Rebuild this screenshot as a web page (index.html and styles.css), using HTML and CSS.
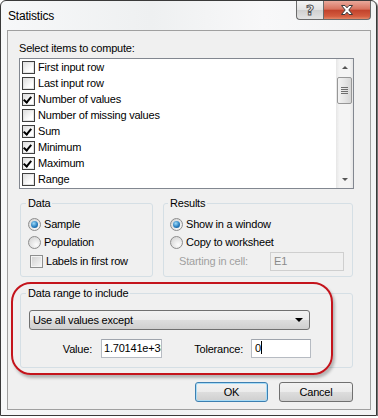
FILE: index.html
```html
<!DOCTYPE html>
<html lang="en">
<head>
    <meta charset="UTF-8">
    <title>Statistics</title>
    <link rel="stylesheet" href="styles.css">
</head>
<body>
    <div class="window">
        <div class="titlebar">
            <span class="title">Statistics</span>
            <div class="caption">
                <span class="caption-help">?</span>
                <span class="caption-close">
                    <svg width="14" height="12" viewBox="0 0 14 12">
                        <path d="M1.5 1.5h3.5l2 2.3 2-2.3h3.5l-3.7 4.5 3.7 4.5h-3.5l-2-2.3-2 2.3h-3.5l3.7-4.5z" fill="#fff" stroke="#3b3b3b" stroke-width="1"/>
                    </svg>
                </span>
            </div>
        </div>

        <div class="client">
            <div class="caption-label">Select items to compute:</div>
            <div class="listbox">
                <div class="items">
                    <div class="item"><span class="check"></span>First input row</div>
                    <div class="item"><span class="check"></span>Last input row</div>
                    <div class="item"><span class="check checked"></span>Number of values</div>
                    <div class="item"><span class="check"></span>Number of missing values</div>
                    <div class="item"><span class="check checked"></span>Sum</div>
                    <div class="item"><span class="check checked"></span>Minimum</div>
                    <div class="item"><span class="check checked"></span>Maximum</div>
                    <div class="item"><span class="check"></span>Range</div>
                </div>
                <div class="scrollbar">
                    <span class="arrow arrow-up"></span>
                    <span class="thumb"><span class="grip"></span></span>
                    <span class="arrow arrow-down"></span>
                </div>
            </div>

            <div class="groups">
                <fieldset class="group group-data">
                    <legend>Data</legend>
                    <div class="row"><span class="radio selected"></span>Sample</div>
                    <div class="row"><span class="radio"></span>Population</div>
                    <div class="row row-last"><span class="box3d"></span>Labels in first row</div>
                </fieldset>
                <fieldset class="group group-results">
                    <legend>Results</legend>
                    <div class="row"><span class="radio selected"></span>Show in a window</div>
                    <div class="row"><span class="radio"></span>Copy to worksheet</div>
                    <div class="row row-last">
                        <span class="disabled-label">Starting in cell:</span>
                        <span class="textbox textbox-disabled">E1</span>
                    </div>
                </fieldset>
            </div>

            <fieldset class="group group-range">
                <legend>Data range to include</legend>
                <div class="combo">
                    <span>Use all values except</span>
                    <span class="combo-arrow"></span>
                </div>
                <div class="value-row">
                    <span class="field-label label-value">Value:</span>
                    <span class="textbox textbox-value">1.70141e+38</span>
                    <span class="field-label label-tolerance">Tolerance:</span>
                    <span class="textbox textbox-tolerance">0<span class="caret"></span></span>
                </div>
            </fieldset>

            <div class="actions">
                <span class="button button-default">OK</span>
                <span class="button">Cancel</span>
            </div>
        </div>

        <!-- highlight drawn over the screenshot -->
        <div class="annotation"></div>
    </div>
</body>
</html>
```

FILE: styles.css
```css
body {
    margin: 0;
    background: #fff;
    font-family: "Liberation Sans", Arial, sans-serif;
    font-size: 11px;
    letter-spacing: -0.2px;
    color: #000;
}
.window {
    position: relative;
    width: 377px;
    height: 416px;
    box-sizing: border-box;
    border: 1px solid #3a3a3a;
    border-radius: 6px 6px 0 0;
    background: linear-gradient(90deg, #f7f8f9, #eef0f1 40%, #f8f8f9 70%, #f2f3f4);
    padding: 0 5px 5px 6px;
    display: flex;
    flex-direction: column;
    box-shadow: 1px 1px 1px rgba(0,0,0,0.6);
}
.titlebar {
    height: 29px;
    display: flex;
    justify-content: space-between;
    align-items: flex-start;
}
.title {
    font-size: 12px;
    line-height: 14px;
    margin-top: 8px;
    padding-left: 1px;
    color: #000;
}
.caption {
    display: flex;
}
.caption-help,
.caption-close {
    height: 18px;
    display: flex;
    align-items: center;
    justify-content: center;
    border: 1px solid #6b6b6b;
    border-top: none;
}
.caption-help {
    width: 26px;
    border-right: none;
    border-radius: 0 0 0 4px;
    background: linear-gradient(#f4f4f4, #e2e2e2 50%, #d0d0d0 51%, #e4e4e4);
    font-family: "DejaVu Sans", sans-serif;
    font-size: 14px;
    font-weight: bold;
    color: #fff;
    -webkit-text-stroke: 1px #555;
}
.caption-close {
    width: 46px;
    border-radius: 0 0 4px 0;
    background: linear-gradient(#e9a99b, #d8735f 45%, #c2432c 52%, #d45c3f 85%, #e38868);
}
.client {
    flex: 1;
    border: 1px solid #a0a0a0;
    background: #f0f0f0;
    padding: 10px 16px 0 11px;
}
.caption-label {
    line-height: 15px;
    margin-bottom: 2px;
}
.listbox {
    height: 131px;
    box-sizing: border-box;
    border: 1px solid #828790;
    background: #fff;
    display: flex;
}
.items {
    flex: 1;
}
.item {
    height: 16px;
    display: flex;
    align-items: center;
    gap: 3px;
    padding-left: 2px;
}
.check {
    width: 11px;
    height: 11px;
    border: 1px solid #3f3f3f;
    background: linear-gradient(135deg, #dcdcdc, #fff 70%);
    box-shadow: inset 0 0 0 1px #e4e4e4;
    position: relative;
}
.check.checked::after,
.box3d.checked::after {
    content: "";
    position: absolute;
    left: 2px;
    top: 1px;
    width: 3px;
    height: 6px;
    border: solid #000;
    border-width: 0 2px 2px 0;
    transform: rotate(40deg);
}
.scrollbar {
    width: 17px;
    background: linear-gradient(90deg, #e6e6e6, #f4f4f4 20%, #f4f4f4 80%, #e6e6e6);
    display: flex;
    flex-direction: column;
    align-items: center;
}
.arrow {
    width: 0;
    height: 0;
    border-left: 3px solid transparent;
    border-right: 3px solid transparent;
}
.arrow-up {
    border-bottom: 3px solid #555;
    margin-top: 7px;
}
.arrow-down {
    border-top: 3px solid #555;
    margin-top: auto;
    margin-bottom: 7px;
}
.thumb {
    width: 13px;
    height: 25px;
    margin-top: 8px;
    border: 1px solid #979797;
    border-radius: 2px;
    background: linear-gradient(90deg, #f3f3f3, #e6e6e6 50%, #d6d6d6);
    display: flex;
    align-items: center;
    justify-content: center;
}
.grip {
    width: 7px;
    height: 7px;
    background: repeating-linear-gradient(#6e6e6e 0, #6e6e6e 1px, transparent 1px, transparent 2px);
}
.groups {
    display: flex;
    gap: 10px;
    margin: 7px 1px 0;
}
.group {
    margin: 0;
    border: 1px solid #d5dfe5;
    border-radius: 3px;
    padding: 6px 0 6px 7px;
    min-width: 0;
}
.group legend {
    line-height: 14px;
    padding: 0 2px;
    margin-left: -2px;
}
.group-data {
    width: 133px;
    box-sizing: border-box;
}
.group-results {
    width: 190px;
    box-sizing: border-box;
    padding-left: 6px;
}
.row {
    height: 16px;
    display: flex;
    align-items: center;
    gap: 3px;
    margin-bottom: 2px;
}
.row-last {
    height: 18px;
    margin: 1px 0 0;
}
.radio {
    width: 11px;
    height: 11px;
    border: 1px solid #8d8d8d;
    border-radius: 50%;
    background: radial-gradient(circle at 65% 70%, #fcfcfc, #d7d7d7 80%);
    position: relative;
}
.radio.selected::after {
    content: "";
    position: absolute;
    left: 2px;
    top: 2px;
    width: 7px;
    height: 7px;
    border-radius: 50%;
    background: radial-gradient(circle at 40% 35%, #9ddbf9, #2a7fc0 55%, #0d4b84);
}
.group-data .row-last {
    padding-left: 2px;
}
.box3d {
    width: 11px;
    height: 11px;
    border: 1px solid #8e8f8f;
    background: linear-gradient(135deg, #d0d0d0, #f8f8f8);
    box-shadow: inset 0 0 0 1px #f4f4f4;
    position: relative;
}
.disabled-label {
    color: #a0a0a0;
    margin-left: 9px;
    flex: 1;
}
.textbox {
    height: 19px;
    box-sizing: border-box;
    border: 1px solid #b6bbc2;
    border-top-color: #a0a5ad;
    background: #fff;
    padding-left: 3px;
    line-height: 17px;
    white-space: nowrap;
    overflow: hidden;
}
.textbox-disabled {
    width: 74px;
    margin-right: 8px;
    background: #f0f0f0;
    border-color: #cfcfcf;
    color: #8a8a8a;
}
.group-range {
    margin: 9px 1px 0;
    padding: 10px 0 9px 8px;
}
.group-range legend {
    margin-left: -3px;
}
.combo {
    width: 281px;
    height: 20px;
    box-sizing: border-box;
    border: 1px solid #707070;
    border-radius: 3px;
    background: linear-gradient(#f2f2f2, #ebebeb 50%, #dddddd 51%, #cfcfcf);
    display: flex;
    align-items: center;
    justify-content: space-between;
    padding: 0 6px 0 3px;
}
.combo-arrow {
    width: 0;
    height: 0;
    border-left: 4px solid transparent;
    border-right: 4px solid transparent;
    border-top: 4px solid #000;
}
.value-row {
    display: flex;
    align-items: center;
    margin-top: 9px;
}
.field-label {
    text-align: right;
}
.label-value {
    width: 63px;
    margin-right: 9px;
}
.textbox-value {
    width: 61px;
    padding-left: 2px;
}
.label-tolerance {
    width: 81px;
    margin-right: 8px;
}
.textbox-tolerance {
    width: 60px;
}
.caret {
    display: inline-block;
    width: 1px;
    height: 13px;
    background: #000;
    vertical-align: -2px;
}
.actions {
    display: flex;
    justify-content: flex-end;
    gap: 11px;
    margin: 14px 1px 0;
}
.button {
    width: 74px;
    height: 20px;
    box-sizing: border-box;
    border: 1px solid #707070;
    border-radius: 3px;
    background: linear-gradient(#f2f2f2, #ebebeb 50%, #dddddd 51%, #cfcfcf);
    display: flex;
    align-items: center;
    justify-content: center;
}
.button-default {
    width: 73px;
    border-color: #3c7fb1;
    box-shadow: inset 0 0 0 1px #a9dcf6;
}
.annotation {
    position: absolute;
    left: 10px;
    top: 281px;
    width: 318px;
    height: 89px;
    border: 2px solid #c4141c;
    border-radius: 20px;
    box-shadow: 2px 3px 3px rgba(0,0,0,0.25);
}
```
